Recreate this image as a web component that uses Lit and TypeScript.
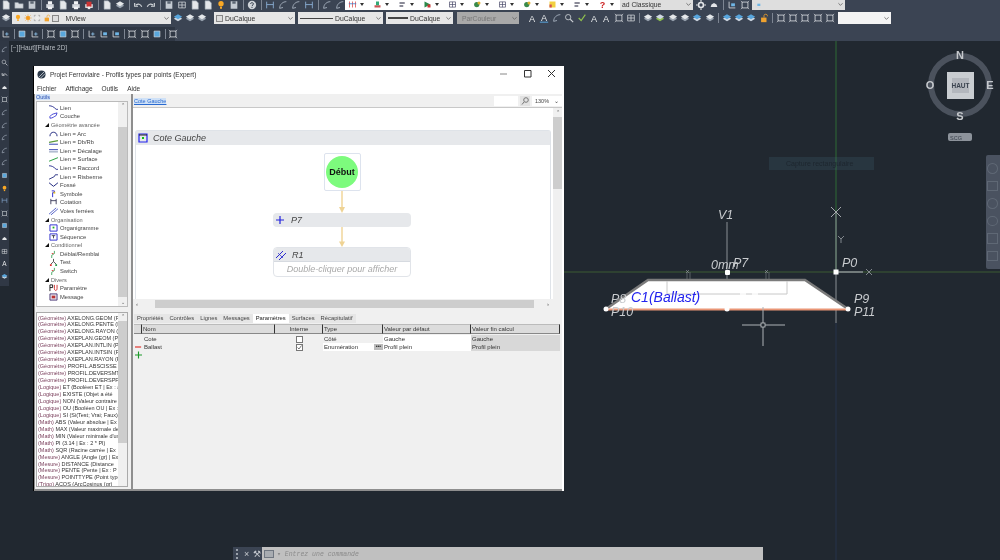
import { LitElement, html, css, svg } from 'lit';
import { customElement } from 'lit/decorators.js';

// small toolbar glyphs, all on a 12x12 box
const GLYPHS: Record<string, unknown> = {
  sheet: svg`<path d="M2.5 1h5l2.5 2.5V11h-7.500z" fill="#e4e7ea" stroke="#9aa3ad" stroke-width=".7"/>`,
  folder: svg`<path d="M1 10V3h4l1 1.500h5V10z" fill="#d7dbe0" stroke="#8d96a1" stroke-width=".6"/>`,
  disk: svg`<path d="M2 1.500h8v9H2z" fill="#c4cad2"/><path d="M4 1.500h4v3H4z" fill="#5c6673"/>`,
  print: svg`<path d="M1.500 5h9v4.500h-9z" fill="#d5d9de"/><path d="M3.500 1.500h5V5h-5z M3.500 8h5v3h-5z" fill="#f2f3f5"/>`,
  red: svg`<path d="M1.500 5h9v4.500h-9z" fill="#e8e8ea"/><path d="M3 2h6v6H3z" fill="#c33"/><path d="M4.500 8h3v3h-3z" fill="#eee"/>`,
  undo: svg`<path d="M10.500 8C9 4.500 6 4.500 3.500 6M2 3.500v4h4" fill="none" stroke="#cfd3d8" stroke-width="1.400"/>`,
  redo: svg`<path d="M1.500 8C3 4.500 6 4.500 8.500 6M10 3.500v4H6" fill="none" stroke="#cfd3d8" stroke-width="1.400"/>`,
  help: svg`<circle cx="6" cy="6" r="5" fill="#cfd3d8"/><path d="M4.200 4.600c.3-2 3.700-1.800 3.500.2C7.600 6 6 6 6 7.400M6 8.400v1.200" fill="none" stroke="#3b4453" stroke-width="1.200"/>`,
  dim: svg`<path d="M2 2v8M10 2v8M2 5.500h8" fill="none" stroke="#8fb4dc" stroke-width="1"/>`,
  arc: svg`<path d="M2 10C2 5 6 2 10 2M2 10l4-1" fill="none" stroke="#aeb9c6" stroke-width="1"/>`,
  ucs: svg`<path d="M2.500 2v7.500H10" fill="none" stroke="#d6dade" stroke-width="1"/><path d="M5 4h4.500v3.500H5z" fill="#6fb6e6"/>`,
  ucs2: svg`<path d="M2.500 2v7.500H10" fill="none" stroke="#d6dade" stroke-width="1"/><path d="M5 6h4M7 4v4" stroke="#8fc3ea"/>`,
  box: svg`<path d="M2.500 2.500h7v7h-7z" fill="#59a7dc" stroke="#d6dade" stroke-width=".8"/>`,
  frame: svg`<path d="M2.500 2.500h7v7h-7z" fill="none" stroke="#d6dade" stroke-width="1"/><path d="M1 1l2 2M11 1L9 3M1 11l2-2M11 11L9 9" stroke="#d6dade" stroke-width=".8"/>`,
  bulb: svg`<circle cx="6" cy="4.500" r="3.200" fill="#f9a825"/><path d="M4.800 8h2.400v2.500H4.800z" fill="#f9a825"/>`,
  sun: svg`<circle cx="6" cy="6" r="3" fill="#f59a1d"/><path d="M6 .5v11M.5 6h11M2 2l8 8M10 2l-8 8" stroke="#f59a1d" stroke-width=".8"/>`,
  lock: svg`<path d="M2.500 5.500h6.500v5.500H2.500z" fill="#f0a22e"/><path d="M6 5.500V3c0-2 4-2 4 0v1" fill="none" stroke="#f0a22e"/>`,
  swatch: svg`<path d="M2.500 2.500h7v7h-7z" fill="#d0d0d0" stroke="#777" stroke-width=".7"/>`,
  corners: svg`<path d="M2 4V2h2M8 2h2v2M10 8v2H8M4 10H2V8" fill="none" stroke="#888" stroke-width=".9"/><path d="M4 4h4v4H4z" fill="#eee"/>`,
  layer: svg`<path d="M1 7l5-3 5 3-5 3z" fill="#cfd8e2"/><path d="M1 4.500l5-3 5 3-5 3z" fill="#58a5dc"/>`,
  layer2: svg`<path d="M1 7l5-3 5 3-5 3z" fill="#8fc04e"/><path d="M1 4.500l5-3 5 3-5 3z" fill="#cfd8e2"/>`,
  layer3: svg`<path d="M1 7l5-3 5 3-5 3z" fill="#9aa4b0"/><path d="M1 4.500l5-3 5 3-5 3z" fill="#e4e7ea"/>`,
  textA: svg`<text x="6" y="10.500" text-anchor="middle" font-size="11" font-family="Liberation Sans" fill="#e6e8ea">A</text>`,
  textB: svg`<text x="6" y="9.500" text-anchor="middle" font-size="11" font-family="Liberation Sans" fill="#e6e8ea">A</text><path d="M1 11h10" stroke="#58a5dc" stroke-width="1.200"/>`,
  search: svg`<circle cx="5" cy="5" r="3.200" fill="none" stroke="#cdd1d6"/><path d="M7.500 7.500L11 11" stroke="#cdd1d6" stroke-width="1.300"/>`,
  check: svg`<path d="M2 6l3 3 5-7" fill="none" stroke="#8fc04e" stroke-width="1.400"/>`,
  gear: svg`<circle cx="6" cy="6" r="3" fill="none" stroke="#e3e5e8" stroke-width="2"/><path d="M6 0v2M6 10v2M0 6h2M10 6h2" stroke="#e3e5e8" stroke-width="1.400"/>`,
  cloud: svg`<path d="M2 8.500h8l-1-3-3-2-3 2z" fill="#e3e5e8"/>`,
  mHash: svg`<path d="M2 2v8M6 2v8M10 2v8" stroke="#d44" stroke-width="1"/><path d="M1 5h10" stroke="#37c" stroke-width="1"/>`,
  mBlock: svg`<path d="M2 7h8v3H2z" fill="#c55"/><path d="M4 2h4v5H4z" fill="#3a7"/>`,
  mNote: svg`<path d="M2 3h7v2H2zM2 7h5v2H2z" fill="#667"/>`,
  mTri: svg`<path d="M2 2l8 4-8 4z" fill="#2a8a4a"/><path d="M6 6h4v4H6z" fill="#c33"/>`,
  mGrid: svg`<path d="M2 2.500h8v7H2z M2 6h8M6 2.500v7" fill="none" stroke="#446" stroke-width=".9"/>`,
  mGridL: svg`<path d="M2 2.500h8v7H2z M2 6h8M6 2.500v7" fill="none" stroke="#d6dade" stroke-width=".9"/>`,
  mBall: svg`<circle cx="5" cy="6" r="3.500" fill="#3a8a4a"/><circle cx="8" cy="4" r="2" fill="#e0b030"/>`,
  mStack: svg`<path d="M2 2h8v8H2z" fill="#f2d040"/><path d="M2 6h3v4H2z" fill="#d05050"/>`,
  mHelp: svg`<text x="6" y="10.500" text-anchor="middle" font-size="12" font-weight="700" font-family="Liberation Sans" fill="#c22">?</text>`,
};

const icon = (name: string) => html`<svg class="ic" viewBox="0 0 12 12">${GLYPHS[name]}</svg>`;

// '|' draws a thin separator between toolbar groups
const bar = (items: string[]) =>
  items.map((n) => (n === '|' ? html`<i class="sep"></i>` : icon(n)));

const TREE: [string, string, string?][] = [
  ['leaf', 'Lien', 'link'],
  ['leaf', 'Couche', 'layerIc'],
  ['head', 'Géométrie avancée'],
  ['leaf', 'Lien = Arc', 'arcIc'],
  ['leaf', 'Lien = Db/Rb', 'dbrb'],
  ['leaf', 'Lien = Décalage', 'offset'],
  ['leaf', 'Lien = Surface', 'surface'],
  ['leaf', 'Lien = Raccord', 'link'],
  ['leaf', 'Lien = Risberme', 'ris'],
  ['leaf', 'Fossé', 'ditch'],
  ['leaf', 'Symbole', 'symbol'],
  ['leaf', 'Cotation', 'cote'],
  ['leaf', 'Voies ferrées', 'rails'],
  ['head', 'Organisation'],
  ['leaf', 'Organigramme', 'orga'],
  ['leaf', 'Séquence', 'seq'],
  ['head', 'Conditionnel'],
  ['leaf', 'Déblai/Remblai', 'fork'],
  ['leaf', 'Test', 'test'],
  ['leaf', 'Switch', 'fork'],
  ['head', 'Divers'],
  ['leaf', 'Paramètre', 'param'],
  ['leaf', 'Message', 'msg'],
];

const TREE_ICONS: Record<string, unknown> = {
  link: svg`<path d="M0 2c3 0 5 1 8 4h2" fill="none" stroke="#22288c" stroke-width="1"/>`,
  layerIc: svg`<path d="M1 5c2-3 5-3 8-4l-1 3C6 5 4 7 1 7z" fill="none" stroke="#2222cc" stroke-width=".9"/>`,
  arcIc: svg`<path d="M1 7C1 1 9 1 9 7" fill="none" stroke="#222a80" stroke-width="1.100"/>`,
  dbrb: svg`<path d="M0 5l10-2" stroke="#5a9a3a" stroke-width="1.400"/><path d="M0 7h10" stroke="#4455bb" stroke-width="1.200"/>`,
  offset: svg`<path d="M0 3h10" stroke="#2233aa" stroke-width="1"/><path d="M0 5.500h10" stroke="#7788aa" stroke-width="1"/>`,
  surface: svg`<path d="M0 7l10-4" stroke="#28a040" stroke-width="1.100"/>`,
  ris: svg`<path d="M0 7l6-3 1-2h3" fill="none" stroke="#222a80" stroke-width="1"/>`,
  ditch: svg`<path d="M0 2l5 4 5-4" fill="none" stroke="#222a80" stroke-width="1.100"/>`,
  symbol: svg`<path d="M3 1h3v2H4v5" fill="none" stroke="#2222cc"/><path d="M5 2h2v2H5z" fill="#e6c020"/>`,
  cote: svg`<path d="M2 1v6M8 1v6M2 3h6" fill="none" stroke="#224" stroke-width=".9"/>`,
  rails: svg`<path d="M0 8L8 1M2 9l8-7" stroke="#3344bb" stroke-width=".9"/>`,
  orga: svg`<path d="M1 1h8v7H1z" fill="none" stroke="#2222cc" stroke-width="1"/><path d="M4 3h2v2H4z" fill="#1db01d"/>`,
  seq: svg`<path d="M1 1h8v7H1z" fill="none" stroke="#2222cc" stroke-width="1"/><path d="M3 3h4M5 3v3" stroke="#223" stroke-width=".9"/>`,
  fork: svg`<path d="M6 1v3L3 6v3" fill="none" stroke="#2a9a4a" stroke-width=".9"/><path d="M3 4h2" stroke="#d33"/>`,
  test: svg`<path d="M5 1v3L2 7M5 4l3 3" fill="none" stroke="#444"/><path d="M1 7h2v2H1z" fill="#d33"/><path d="M7 7h2v2H7z" fill="#2a9a4a"/>`,
  param: svg`<path d="M1 1v7M1 1h3v3H1" fill="none" stroke="#111" stroke-width="1"/><path d="M6 1v4c0 3 3 3 3 0V1" fill="none" stroke="#c22" stroke-width="1"/>`,
  msg: svg`<path d="M1 1h8v7H1z" fill="#e6e0ea" stroke="#332266" stroke-width=".9"/><path d="M3 3h4v3H3z" fill="#b33"/>`,
};

const FUNCTIONS: [string, string][] = [
  ['(Géométre)', 'AXELONG.GEOM (Point'],
  ['(Géométre)', 'AXELONG.PENTE (Pente'],
  ['(Géométre)', 'AXELONG.RAYON (Rayon'],
  ['(Géométre)', 'AXEPLAN.GEOM (Point'],
  ['(Géométre)', 'AXEPLAN.INTLIN (Point'],
  ['(Géométre)', 'AXEPLAN.INTSIN (Point'],
  ['(Géométre)', 'AXEPLAN.RAYON (Rayon'],
  ['(Géométre)', 'PROFIL.ABSCISSE (Abs'],
  ['(Géométre)', 'PROFIL.DEVERSMT (Dev'],
  ['(Géométre)', 'PROFIL.DEVERSPF (Dev'],
  ['(Logique)', 'ET (Booléen ET | Ex : a'],
  ['(Logique)', 'EXISTE (Objet a été'],
  ['(Logique)', 'NON (Valeur contraire'],
  ['(Logique)', 'OU (Booléen OU | Ex : a'],
  ['(Logique)', 'SI (Si(Test; Vrai; Faux)'],
  ['(Math)', 'ABS (Valeur absolue | Ex'],
  ['(Math)', 'MAX (Valeur maximale de'],
  ['(Math)', 'MIN (Valeur minimale d\'un'],
  ['(Math)', 'PI (3.14 | Ex : 2 * PI)'],
  ['(Math)', 'SQR (Racine carrée | Ex'],
  ['(Mesure)', 'ANGLE (Angle (gr) | Ex'],
  ['(Mesure)', 'DISTANCE (Distance'],
  ['(Mesure)', 'PENTE (Pente | Ex : P'],
  ['(Mesure)', 'POINTTYPE (Point type'],
  ['(Trigo)', 'ACOS (ArcCosinus (gr)'],
];

const TABS = ['Propriétés', 'Contrôles', 'Lignes', 'Messages', 'Paramètres', 'Surfaces', 'Récapitulatif'];

@customElement('app-root')
export class AppRoot extends LitElement {
  static styles = css`
    :host {
      display: block;
      width: 1000px;
      height: 560px;
      font-family: 'Liberation Sans', Arial, sans-serif;
    }
    .screen {
      position: relative;
      width: 1000px;
      height: 560px;
      overflow: hidden;
      display: flex;
      flex-direction: column;
      background: #212830;
      filter: blur(0.35px);
    }

    /* ribbon */
    .ribbon { background: #3b4453; height: 41px; flex: none; display: flex; flex-direction: column; }
    .row { display: flex; align-items: center; }
    .row1 { height: 9.500px; overflow: hidden; align-items: flex-end; }
    .row2 { height: 13px; margin-top: 2px; }
    .row3 { height: 14px; margin-top: 2px; background: #3b4453; }
    .ic { width: 10px; height: 10px; flex: none; display: block; }
    .sep { width: 1px; height: 10px; background: #7d8592; flex: none; display: block; margin: 0 .5px; }
    .dark { display: flex; align-items: center; gap: 2.500px; flex: none; box-sizing: border-box; }
    .row1 .dark { width: 345px; gap: 3px; padding-left: 1px; }
    .row1 .ic { width: 10px; height: 10px; margin-bottom: -1px; }
    .light { display: flex; align-items: center; background: #fff; width: 275px; height: 9.500px; padding-left: 3px; box-sizing: border-box; flex: none; }
    .light .cell { width: 25px; flex: none; display: flex; align-items: center; gap: 3px; }
    .light .ic { width: 9px; height: 9px; margin: 0; }
    .light .caret { width: 0; height: 0; border: 2.500px solid transparent; border-top: 3px solid #333; border-bottom: 0; display: block; }
    .combo {
      flex: none;
      height: 12px;
      box-sizing: border-box;
      background: #e6e6e6;
      color: #333;
      font-size: 6.800px;
      display: flex;
      align-items: center;
      gap: 2px;
      padding: 0 2px;
      overflow: hidden;
      white-space: nowrap;
    }
    .combo .ic { width: 8px; height: 8px; }
    .combo .chev { margin-left: auto; width: 5px; height: 5px; flex: none; }
    .combo .stroke { width: 33px; height: 1px; background: #444; flex: none; }
    .combo .stroke.fat { height: 2px; width: 20px; }
    .combo .sw { width: 7px; height: 7px; border: 1px solid #888; flex: none; background: #ddd; box-sizing: border-box; }
    .combo.off { background: #a9a9a9; color: #777; }
    .combo.off span { margin-left: 3px; }
    .row3 .strip { display: flex; align-items: center; gap: 2.200px; background: #2f3744; width: 175px; height: 14px; padding-left: 1px; box-sizing: border-box; flex: none; }
    .row3 .ic { width: 10px; height: 10px; }

    /* model space */
    .viewport { flex: 1; position: relative; }
    .drawing { position: absolute; left: 0; top: -41px; width: 1000px; height: 560px; }
    .strip-left {
      position: absolute;
      left: 0;
      top: 0;
      width: 9px;
      height: 245px;
      background: #303845;
      display: flex;
      flex-direction: column;
      gap: 5.600px;
      padding: 5px 0 0 1px;
      box-sizing: border-box;
    }
    .strip-left .ic { width: 7px; height: 7px; }
    .vp-label { position: absolute; left: 11px; top: 3px; font-size: 6.500px; color: #b9bec4; white-space: nowrap; }
    .tooltip {
      position: absolute;
      left: 769px;
      top: 116px;
      width: 105px;
      height: 13px;
      background: rgba(70, 105, 125, 0.22);
      color: #1d262e;
      font-size: 7px;
      line-height: 13px;
      padding-left: 17px;
      box-sizing: border-box;
    }
    .navbar {
      position: absolute;
      left: 986px;
      top: 114px;
      width: 14px;
      height: 114px;
      background: #4a5260;
      border-radius: 2px 0 0 2px;
      display: flex;
      flex-direction: column;
      gap: 7px;
      padding: 8px 1px;
      box-sizing: border-box;
    }
    .navbar b { display: block; width: 11px; height: 11px; border: 1px solid #5f6875; box-sizing: border-box; border-radius: 50%; }
    .navbar b.sq { border-radius: 0; }

    /* command line */
    .cmd { position: absolute; left: 233px; bottom: 0; width: 530px; height: 13px; display: flex; background: #3b4453; }
    .cmd-tools { width: 29px; flex: none; display: flex; align-items: center; gap: 4px; padding-left: 3px; box-sizing: border-box; color: #c5c9cf; font-size: 9px; }
    .cmd-grip { width: 2px; height: 10px; border-left: 2px dotted #9aa1ab; }
    .cmd-input { flex: 1; background: #c0c0c0; color: #8a8a8a; display: flex; align-items: center; gap: 3px; padding-left: 2px; font: italic 6.500px 'Liberation Mono', monospace; }
    .cmd-input span { border: 1px solid #6f7680; width: 8px; height: 6px; background: #a8acb1; }

    /* the floating editor window */
    .window {
      position: absolute;
      left: 34px;
      top: 66px;
      width: 530px;
      height: 425px;
      background: #fff;
      color: #222;
      display: flex;
      flex-direction: column;
      box-shadow: -1px 0 0 #000;
    }
    .title { height: 16px; flex: none; display: flex; align-items: center; gap: 4px; padding-left: 3px; font-size: 6.500px; color: #333; }
    .title .logo { width: 9px; height: 9px; }
    .controls { margin-left: auto; display: flex; gap: 14px; padding-right: 7px; align-items: center; }
    .controls svg { width: 10px; height: 10px; display: block; }
    .menu { height: 12px; flex: none; display: flex; gap: 9px; align-items: center; padding-left: 3px; font-size: 6.500px; color: #333; }
    .body { flex: 1; min-height: 0; display: grid; grid-template-columns: 96px 1fr; gap: 2px; padding: 0 2px 2px 1px; background: #8e8e8e; margin: 0 2px 0 0; }
    .side, .main { background: #f0f0f0; display: flex; flex-direction: column; min-height: 0; }
    .side-label { height: 7px; font-size: 5.500px; line-height: 7px; color: #2a4fb0; flex: none; padding-left: 1px; }
    .side-label span { background: #cfe1f7; }

    .tree { height: 206px; flex: none; margin: 0 3px 0 1px; background: #fff; border: 1px solid #bbb; box-sizing: border-box; display: flex; overflow: hidden; }
    .tree-list { flex: 1; padding-top: 1.500px; min-width: 0; }
    .tree-row { height: 8.600px; display: flex; align-items: center; font-size: 5.800px; color: #444; white-space: nowrap; }
    .tree-row svg { width: 9px; height: 8px; flex: none; margin: 0 2px 0 12px; display: block; }
    .tree-row.head { padding-left: 8px; gap: 2px; color: #666; font-size: 5.600px; }
    .tree-row.head::before { content: ''; width: 0; height: 0; border-left: 4px solid transparent; border-bottom: 4px solid #111; display: block; }
    .scroll { width: 9px; flex: none; background: #f0f0f0; display: flex; flex-direction: column; align-items: center; color: #555; font-size: 5px; line-height: 7px; }
    .thumb { background: #cdcdcd; width: 100%; }
    .funcs { flex: 1; min-height: 0; margin: 5px 3px 2px 1px; background: #fff; border: 1px solid #aaa; display: flex; overflow: hidden; }
    .func-list { flex: 1; min-width: 0; padding-top: 1.500px; overflow: hidden; }
    .func { height: 6.960px; line-height: 6.960px; font-size: 5.500px; white-space: nowrap; color: #333; padding-left: 1px; }
    .func em { font-style: normal; color: #7a3f5c; }

    .crumb { height: 14px; flex: none; background: #f0f0f0; display: flex; align-items: center; font-size: 5.500px; color: #2a6ad0; padding-left: 1px; border-bottom: 1px solid #c8c8c8; box-sizing: border-box; }
    .crumb a { background: #cfe1f7; text-decoration: underline; }
    .crumb .find { margin-left: auto; width: 24px; height: 10px; background: #fff; }
    .crumb .mag { width: 10px; height: 10px; background: #e2e2e2; margin: 0 2px; display: flex; }
    .crumb .mag svg { width: 10px; height: 10px; }
    .crumb .zoom { width: 30px; height: 10px; background: #fff; color: #444; display: flex; align-items: center; justify-content: space-between; padding: 0 3px; box-sizing: border-box; }

    .flow-wrap { height: 191px; flex: none; display: flex; background: #fff; }
    .flow { flex: 1; min-width: 0; padding: 22px 2px 0 2px; display: flex; flex-direction: column; }
    .seq-card { flex: 1; border: 1px solid #dfe3e8; border-bottom: 0; border-radius: 3px 3px 0 0; display: flex; flex-direction: column; align-items: center; }
    .seq-card > :not(.seq-head) { margin-right: 2px; }
    .seq-head { align-self: stretch; height: 14px; background: #e6e8eb; display: flex; align-items: center; gap: 5px; padding-left: 2px; font: italic 9px 'Liberation Sans', Arial, sans-serif; color: #444; flex: none; }
    .seq-head svg, .node-head svg { width: 10px; height: 10px; flex: none; }
    .start { margin-top: 8px; width: 37px; height: 38px; box-sizing: border-box; border: 1px solid #dde3ee; border-radius: 2px; display: flex; align-items: center; justify-content: center; }
    .start span { width: 32px; height: 32px; border-radius: 50%; background: #7dfb7d; display: flex; align-items: center; justify-content: center; font-size: 9px; font-weight: 700; color: #111; }
    .arrow { display: block; width: 8px; height: 22px; flex: none; }
    .arrow.short { height: 20px; }
    .node { width: 138px; flex: none; border-radius: 4px; }
    .node-head { height: 14px; background: #e6e8eb; border-radius: 4px; display: flex; align-items: center; gap: 6px; padding-left: 2px; font: italic 9px 'Liberation Sans', Arial, sans-serif; color: #444; }
    .node.full { border: 1px solid #e1e4e9; box-sizing: border-box; height: 30px; }
    .node.full .node-head { border-radius: 3px 3px 0 0; height: 13px; border-bottom: 1px solid #d6dae0; }
    .node-note { text-align: center; font: italic 9px/15px 'Liberation Sans', Arial, sans-serif; color: #aaa; white-space: nowrap; }
    .vscroll { width: 9px; flex: none; background: #f0f0f0; font-size: 5px; line-height: 8px; text-align: center; color: #555; }
    .vscroll div { height: 72px; background: #cdcdcd; margin-top: 1px; }
    .hscroll { height: 10px; flex: none; background: #f0f0f0; display: flex; align-items: center; padding: 0 13px 0 3px; box-sizing: border-box; font-size: 6px; color: #555; }
    .hscroll div { flex: none; width: 379px; height: 8px; background: #cdcdcd; margin: 0 auto 0 17px; }

    .tabs { margin-top: 5px; height: 9px; flex: none; display: flex; font-size: 5.800px; padding-left: 1px; color: #444; }
    .tab { padding: 0 3px; line-height: 9px; background: #e6e6e6; }
    .tab.on { background: #fff; color: #222; }
    .grid {
      margin: 1px 2px 0 1px;
      font-size: 6px;
      color: #333;
      display: grid;
      grid-template-columns: 8px 133px 48px 60px 88px 89px;
      grid-template-rows: 10px 1px 8px 8px 8px;
    }
    .grid > div { display: flex; align-items: center; padding-left: 1px; overflow: hidden; white-space: nowrap; box-sizing: border-box; }
    .grid .h { background: #dcdcdc; border-right: 1px solid #333; border-top: 1px solid #bbb; border-bottom: 1px solid #888; }
    .grid .h.c { justify-content: center; }
    .grid .w { background: #fff; }
    .grid .g { background: #d8d8d8; }
    .grid .c { justify-content: center; }
    .grid .hdrgap { grid-column: 1 / -1; }
    .box { width: 7px; height: 7px; border: 1px solid #777; background: #fff; box-sizing: border-box; display: block; }
    .box svg { display: block; width: 5px; height: 5px; }
    .dots { margin-left: auto; width: 9px; height: 6px; background: #bbb; font-size: 5px; line-height: 5px; text-align: center; font-weight: 700; }
    .mark { width: 8px; height: 8px; display: block; }
  `;

  private chev() {
    return html`<svg class="chev" viewBox="0 0 6 6"><path d="M.5 1.500L3 4l2.500-2.500" fill="none" stroke="#666"/></svg>`;
  }

  private ribbon() {
    return html`
      <div class="ribbon">
        <div class="row row1">
          <div class="dark">
            ${bar(['sheet', 'folder', 'disk', '|', 'print', 'sheet', 'print', 'red', '|', 'sheet', 'layer3', '|', 'undo', 'redo', '|', 'disk', 'mGridL', 'sheet', 'sheet', 'bulb', 'disk', '|', 'help', '|', 'dim', 'arc', 'arc', 'dim', '|', 'arc', 'arc', 'search'])}
          </div>
          <div class="light">
            ${['mHash', 'mBlock', 'mNote', 'mTri', 'mGrid', 'mBall', 'mGrid', 'mBall', 'mStack', 'mNote', 'mHelp'].map(
              (n) => html`<span class="cell">${icon(n)}<i class="caret"></i></span>`,
            )}
          </div>
          <div class="combo" style="width:73px;height:9.500px;background:#dedede">
            <span>ad Classique</span>${this.chev()}
          </div>
          <div class="dark" style="width:59px;padding-left:3px;justify-content:flex-start">
            ${bar(['gear', 'cloud', '|', 'ucs', 'frame'])}
          </div>
          <div class="combo" style="width:93px;height:9.500px;background:#dedede">
            ${icon('ucs')}${this.chev()}
          </div>
        </div>
        <div class="row row2">
          <div class="dark" style="width:12px;padding-left:1px">${icon('layer3')}</div>
          <div class="combo" style="width:159px;gap:1.500px">
            ${icon('bulb')}${icon('sun')}${icon('corners')}${icon('lock')}<i class="sw"></i>
            <span style="margin-left:5px">MView</span>${this.chev()}
          </div>
          <div class="dark" style="width:43px;padding-left:2px;gap:2px">${bar(['layer', 'layer3', 'layer3'])}</div>
          <div class="combo" style="width:81px"><i class="sw"></i><span>DuCalque</span>${this.chev()}</div>
          <div class="combo" style="width:85px;margin-left:3px"><i class="stroke"></i><span>DuCalque</span>${this.chev()}</div>
          <div class="combo" style="width:67px;margin-left:3px"><i class="stroke fat"></i><span>DuCalque</span>${this.chev()}</div>
          <div class="combo off" style="width:62px;margin-left:4px"><span>ParCouleur</span>${this.chev()}</div>
          <div class="dark" style="width:319px;padding-left:8px;gap:2.400px">
            ${bar(['textA', 'textB', 'arc', 'search', 'check', 'textA', 'textA', 'frame', 'mGridL', '|', 'layer3', 'layer2', 'layer3', 'layer3', 'layer', 'layer3', '|', 'layer', 'layer', 'layer', 'lock', '|', 'frame', 'frame', 'frame', 'frame', 'frame'])}
          </div>
          <div class="combo" style="width:53px;background:#f4f4f4">${this.chev()}</div>
        </div>
        <div class="row row3">
          <div class="strip">
            ${bar(['ucs2', '|', 'box', 'ucs2', '|', 'frame', 'box', 'frame', '|', 'ucs2', 'ucs', 'ucs', '|', 'frame', 'frame', 'box', '|', 'frame'])}
          </div>
        </div>
      </div>
    `;
  }

  private drawing() {
    const label = 'font-family:Liberation Sans,Arial,sans-serif;font-style:italic';
    return svg`
      <path d="M564 272H1000" stroke="#3d5a33" stroke-width="1"/>
      <path d="M836 41V272" stroke="#2f6b35" stroke-width="1"/>
      <path d="M836 323V560" stroke="#27324a" stroke-width="1"/>

      <path d="M727 222V281" stroke="#8a8f94"/>
      <path d="M836 212V323" stroke="#8a8f94"/>
      <path d="M836 272H863" stroke="#8a8f94" stroke-width="1.500"/>
      <path d="M831 207l10 10M841 207l-10 10" stroke="#a5a9ad"/>
      <path d="M866 269l6 6M872 269l-6 6" stroke="#9aa0a5" stroke-width=".8"/>
      <path d="M838 236l3 3 3-3M841 239v4" fill="none" stroke="#9aa0a5" stroke-width=".8"/>

      <path d="M687 272v8M690 272v8M766 272v8M769 272v8" stroke="#6b7075" stroke-width=".8"/>
      <path d="M686 270l3 3M689 270l-3 3M765 270l3 3M768 270l-3 3" stroke="#9aa0a5" stroke-width=".6"/>

      <polygon points="648,280 805,280 848,309 606,309" fill="#fff"/>
      <path d="M606 309L648 280H805L848 309" fill="none" stroke="#7b7b7b" stroke-width="2.500"/>
      <path d="M606 309.500H848" stroke="#ea9676" stroke-width="2"/>
      <path d="M667 281V294H787V281" fill="none" stroke="#c8c8c8" stroke-width="1"/>
      <path d="M740 294h6M752 294h6" stroke="#fff" stroke-width="1.500"/>

      <path d="M763 307V346M742 325H785" stroke="#aeb2b6" stroke-width="1"/>
      <rect x="761" y="323" width="4" height="4" fill="#212830" stroke="#c5c8cb" stroke-width=".8"/>

      <circle cx="606" cy="309" r="2.500" fill="#fff"/>
      <circle cx="848" cy="309" r="2.500" fill="#fff"/>
      <circle cx="727" cy="309" r="2.500" fill="#fff"/>
      <rect x="725" y="270" width="5" height="5" rx="1" fill="#fff"/>
      <rect x="833.500" y="269.500" width="5" height="5" fill="#fff"/>

      <g font-size="12.500" fill="#c8cbce" style=${label}>
        <text x="718" y="219">V1</text>
        <text x="711" y="269">0mm</text>
        <text x="733" y="267">P7</text>
        <text x="842" y="267">P0</text>
        <text x="611" y="303">P8</text>
        <text x="611" y="316">P10</text>
        <text x="854" y="303">P9</text>
        <text x="854" y="316">P11</text>
      </g>
      <text x="631" y="302" font-size="14" fill="#2323ee" style=${label}>C1(Ballast)</text>

      <circle cx="960" cy="85" r="29" fill="none" stroke="#4b525d" stroke-width="6"/>
      <rect x="947" y="72" width="27" height="27" fill="#c9cdd1"/>
      <rect x="952" y="78" width="17" height="15" fill="#b3b7bd"/>
      <text x="960.500" y="88" text-anchor="middle" font-size="6.500" font-weight="700" fill="#3b4450" font-family="Liberation Sans">HAUT</text>
      <g font-size="11" font-weight="700" fill="#c6c9cd" text-anchor="middle" font-family="Liberation Sans">
        <text x="960" y="59">N</text>
        <text x="960" y="120">S</text>
        <text x="990" y="89">E</text>
        <text x="930" y="89">O</text>
      </g>
      <rect x="948" y="133" width="24" height="8" rx="2" fill="#8d939b"/>
      <text x="950" y="139.500" font-size="5.500" fill="#39414c" font-family="Liberation Sans">SCG</text>
    `;
  }

  private tree() {
    return html`
      <div class="tree">
        <div class="tree-list">
          ${TREE.map(([kind, text, ic]) =>
            kind === 'head'
              ? html`<div class="tree-row head">${text}</div>`
              : html`<div class="tree-row">
                  <svg viewBox="0 0 10 9">${TREE_ICONS[ic as string]}</svg>${text}
                </div>`,
          )}
        </div>
        <div class="scroll">
          <span>⌃</span>
          <div class="thumb" style="height:172px;margin-top:18px"></div>
          <span style="margin-top:2px">⌄</span>
        </div>
      </div>
    `;
  }

  private funcs() {
    return html`
      <div class="funcs">
        <div class="func-list">
          ${FUNCTIONS.map(([cat, rest]) => html`<div class="func"><em>${cat}</em> ${rest}</div>`)}
        </div>
        <div class="scroll">
          <span>⌃</span>
          <div class="thumb" style="height:122px;margin-top:1px"></div>
        </div>
      </div>
    `;
  }

  private arrow(cls = '') {
    return html`<svg class="arrow ${cls}" viewBox="0 0 8 22" preserveAspectRatio="none">
      <path d="M4 0V17" stroke="#efd394" stroke-width="1.400"/>
      <path d="M1 16h6l-3 6z" fill="#efd394"/>
    </svg>`;
  }

  private flow() {
    return html`
      <div class="flow-wrap">
        <div class="flow">
          <div class="seq-card">
            <div class="seq-head">
              <svg viewBox="0 0 10 10"><path d="M1 1h8v8H1z" fill="none" stroke="#2222ee" stroke-width="1.200"/><path d="M1 2h8" stroke="#222" stroke-width="1"/><path d="M4 4h2v2H4z" fill="#10c010"/></svg>
              Cote Gauche
            </div>
            <div class="start"><span>Début</span></div>
            ${this.arrow()}
            <div class="node">
              <div class="node-head">
                <svg viewBox="0 0 10 10"><path d="M5 1v8M1 5h8" stroke="#2222dd" stroke-width="1.200"/></svg>P7
              </div>
            </div>
            ${this.arrow('short')}
            <div class="node full">
              <div class="node-head">
                <svg viewBox="0 0 10 10"><path d="M0 8L7 1M3 10l7-7" stroke="#2a2ad0" stroke-width="1"/><path d="M2 3l5 5" stroke="#2a2ad0" stroke-width=".7"/></svg>R1
              </div>
              <div class="node-note">Double-cliquer pour afficher</div>
            </div>
          </div>
        </div>
        <div class="vscroll">⌃<div></div></div>
      </div>
      <div class="hscroll"><span>‹</span><div></div><span>›</span></div>
    `;
  }

  private table() {
    const tick = html`<svg viewBox="0 0 5 5"><path d="M.5 2.500L2 4l2.500-3.500" fill="none" stroke="#555" stroke-width=".8"/></svg>`;
    return html`
      <div class="grid">
        <div class="h"></div><div class="h">Nom</div><div class="h c">Interne</div>
        <div class="h">Type</div><div class="h">Valeur par défaut</div><div class="h">Valeur fin calcul</div>
        <div class="hdrgap"></div>

        <div></div><div style="padding-left:2px">Cote</div><div class="c"><i class="box"></i></div>
        <div>Côté</div><div class="w">Gauche</div><div class="g">Gauche</div>

        <div><svg class="mark" viewBox="0 0 8 8"><path d="M0 4h7" stroke="#e2504a" stroke-width="1.600"/></svg></div>
        <div style="padding-left:2px">Ballast</div><div class="c"><i class="box">${tick}</i></div>
        <div class="w">Enumération<span class="dots">•••</span></div><div class="w">Profil plein</div><div class="g">Profil plein</div>

        <div><svg class="mark" viewBox="0 0 8 8"><path d="M4 0v8M0 4h8" stroke="#1c9a2a" stroke-width="1.300"/></svg></div>
      </div>
    `;
  }

  private editor() {
    return html`
      <div class="window">
        <div class="title">
          <svg class="logo" viewBox="0 0 10 10">
            <circle cx="5" cy="5" r="4.500" fill="#2d3a4a"/><path d="M2 8l6-6M4 9l5-5" stroke="#dfe5ec" stroke-width=".8"/>
          </svg>
          <span>Projet Ferroviaire - Profils types par points (Expert)</span>
          <div class="controls">
            <svg viewBox="0 0 10 10"><path d="M1 5h7" stroke="#888" stroke-width="1"/></svg>
            <svg viewBox="0 0 10 10"><path d="M1.500 1.500h6.500v6.500H1.500z" fill="none" stroke="#333" stroke-width="1"/></svg>
            <svg viewBox="0 0 10 10"><path d="M1 1l7 7M8 1l-7 7" stroke="#333" stroke-width="1"/></svg>
          </div>
        </div>
        <div class="menu"><span>Fichier</span><span>Affichage</span><span>Outils</span><span>Aide</span></div>
        <div class="body">
          <div class="side">
            <div class="side-label"><span>Outils</span></div>
            ${this.tree()}
            ${this.funcs()}
          </div>
          <div class="main">
            <div class="crumb">
              <a>Cote Gauche</a>
              <span class="find"></span>
              <span class="mag"><svg viewBox="0 0 10 10"><circle cx="6" cy="4" r="2.300" fill="none" stroke="#777"/><path d="M4 6L2 8.500" stroke="#777"/></svg></span>
              <span class="zoom">130%<span>⌄</span></span>
            </div>
            ${this.flow()}
            <div class="tabs">
              ${TABS.map((t) => html`<span class="tab ${t === 'Paramètres' ? 'on' : ''}">${t}</span>`)}
            </div>
            ${this.table()}
          </div>
        </div>
      </div>
    `;
  }

  render() {
    return html`
      <div class="screen">
        ${this.ribbon()}
        <div class="viewport">
          <svg class="drawing" viewBox="0 0 1000 560">${this.drawing()}</svg>
          <div class="strip-left">
            ${['arc', 'search', 'undo', 'cloud', 'frame', 'arc', 'arc', 'arc', 'arc', 'arc', 'box', 'bulb', 'dim', 'frame', 'box', 'cloud', 'mGridL', 'textA', 'layer'].map((n) => icon(n))}
          </div>
          <div class="vp-label">[−][Haut][Filaire 2D]</div>
          <div class="tooltip">Capture rectangulaire</div>
          <div class="navbar"><b></b><b class="sq"></b><b></b><b></b><b class="sq"></b><b class="sq"></b></div>
        </div>
        ${this.editor()}
        <div class="cmd">
          <div class="cmd-tools"><i class="cmd-grip"></i><span>×</span><span>⚒</span></div>
          <div class="cmd-input"><span></span>▾ Entrez une commande</div>
        </div>
      </div>
    `;
  }
}
